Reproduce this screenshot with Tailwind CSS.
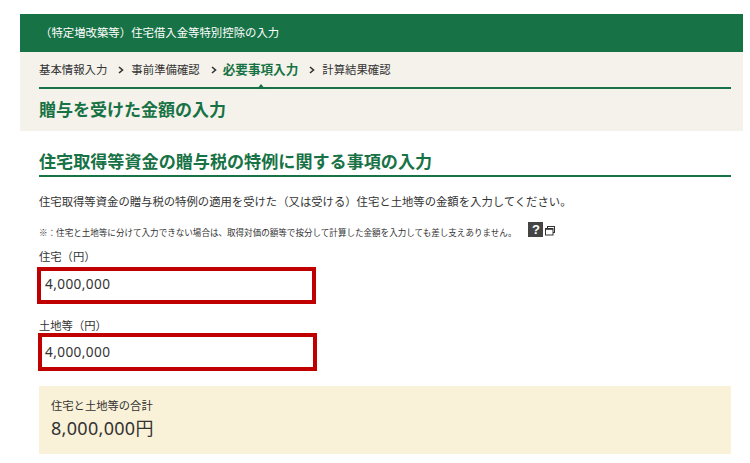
<!DOCTYPE html>
<html lang="ja"><head><meta charset="utf-8"><script src="https://cdn.jsdelivr.net/npm/@tailwindcss/browser@4"></script></head>
<body class="bg-white w-[750px] h-[463px] overflow-hidden font-['Noto_Sans_CJK_JP','Noto_Sans',sans-serif] text-[#333]">
<div class="ml-5 mr-[7px] pt-[14px]">
  <div class="h-[38px] bg-[#177245] text-white text-[11.4px] flex items-center pl-[20px]">&#xFF08;特定増改築等&#xFF09;住宅借入金等特別控除の入力</div>
  <div class="h-[79px] bg-[#f5f2eb] pl-[19px] pr-3">
    <div class="h-[37px] border-b-2 border-[#177245] flex items-center text-[11.4px] relative">
      <span>基本情報入力</span>
      <svg class="ml-[11px] mr-[7px]" width="6" height="8" viewBox="0 0 6 8" fill="none" stroke="#333" stroke-width="1.6"><path d="M1 1l3.5 3L1 7"/></svg>
      <span>事前準備確認</span>
      <svg class="ml-[11px] mr-[6px]" width="6" height="8" viewBox="0 0 6 8" fill="none" stroke="#333" stroke-width="1.6"><path d="M1 1l3.5 3L1 7"/></svg>
      <span class="font-bold text-[#177245] text-[12.6px]">必要事項入力</span>
      <svg class="ml-[11px] mr-[7px]" width="6" height="8" viewBox="0 0 6 8" fill="none" stroke="#333" stroke-width="1.6"><path d="M1 1l3.5 3L1 7"/></svg>
      <span>計算結果確認</span>
      <span class="absolute left-[218px] -bottom-[2px] w-0 h-0 border-x-[4px] border-x-transparent border-b-[5px] border-b-[#177245]"></span>
    </div>
    <h2 class="mt-[8px] text-[17px] leading-[24px] font-bold text-[#177245]">贈与を受けた金額の入力</h2>
  </div>
  <div class="pl-[19px] pr-3">
    <h3 class="mt-[17px] text-[17.1px] leading-[25px] font-bold text-[#177245] border-b-2 border-[#177245] pb-[2px] h-[29px]">住宅取得等資金の贈与税の特例に関する事項の入力</h3>
    <p class="mt-[15px] text-[11.35px] leading-[18px]">住宅取得等資金の贈与税の特例の適用を受けた&#xFF08;又は受ける&#xFF09;住宅と土地等の金額を入力してください。</p>
    <div class="mt-[13px] flex items-center h-[18px] text-[8.55px]">
      <span>※&#xFF1A;住宅と土地等に分けて入力できない場合は、取得対価の額等で按分して計算した金額を入力しても差し支えありません。</span>
      <span class="ml-[12px] -mt-[5px] w-[15px] h-[15px] bg-[#444] text-white text-[13px] font-bold flex items-center justify-center leading-none font-['Liberation_Sans']">?</span>
      <svg class="ml-[2px] -mt-[3px]" width="10" height="10" viewBox="0 0 10 10" fill="none" stroke="#333"><rect x="2.5" y="0.5" width="7" height="6" stroke-width="1"/><rect x="0.5" y="2.5" width="7.5" height="6.5" fill="#fff" stroke-width="1"/><path d="M0.5 3h7.5" stroke-width="1.6"/></svg>
    </div>
    <label class="block mt-[7px] text-[11.3px] leading-[16px]">住宅&#xFF08;円&#xFF09;</label>
    <div class="mt-[3px] -ml-[2px] w-[279px] h-[37px] border-[4px] border-[#c00000] bg-white flex items-center pl-[4px] pb-[2px] text-[13.6px] tracking-[0.4px] font-['Noto_Sans']">4,000,000</div>
    <label class="block mt-[13px] text-[11.3px] leading-[16px]">土地等&#xFF08;円&#xFF09;</label>
    <div class="-ml-[1px] w-[279px] h-[38px] border-[4px] border-[#c00000] bg-white flex items-center pl-[3px] text-[13.6px] tracking-[0.4px] font-['Noto_Sans']">4,000,000</div>
  </div>
  <div class="mt-[15px] ml-[19px] mr-3 h-[68px] bg-[#f9f1d8] pl-3 pt-[11px]">
    <div class="text-[11.3px] leading-[16px]">住宅と土地等の合計</div>
    <div class="mt-[2px] text-[18px] leading-[26px] tracking-[0.3px] font-['Noto_Sans','Noto_Sans_CJK_JP']">8,000,000円</div>
  </div>
</div>
</body></html>
